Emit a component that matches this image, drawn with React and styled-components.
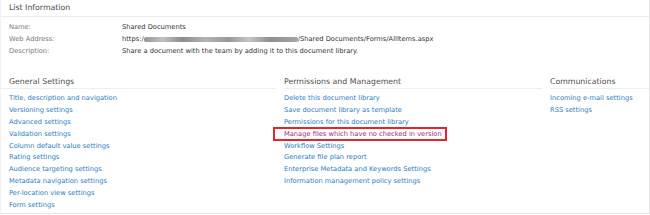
import React from "react";
import styled, { createGlobalStyle } from "styled-components";

const GlobalStyle = createGlobalStyle`
  html, body {
    margin: 0;
    padding: 0;
    background: #ffffff;
  }
  body {
    font-family: "DejaVu Sans", Verdana, sans-serif;
    -webkit-font-smoothing: antialiased;
  }
`;

const Panel = styled.div`
  width: 648px;
  height: 213px;
  border-left: 1px solid #f1f1f1;
  border-right: 1px solid #e4e4e4;
  border-bottom: 1px solid #e4e4e4;
  box-sizing: content-box;
  background: #fff;
`;

const SectionTitle = styled.div`
  height: 16px;
  line-height: 16px;
  padding-left: 8px;
  font-size: 7.8px;
  color: #4a4a4a;
  border-bottom: 1px solid #ececec;
`;

const InfoTable = styled.div`
  display: grid;
  grid-template-columns: 113px 1fr;
  padding: 4px 0 0 8px;
  font-size: 6.7px;
  line-height: 12px;
`;

const Label = styled.div`
  color: #7a7a7a;
`;

const Value = styled.div`
  color: #333;
  white-space: nowrap;
`;

const Smudge = styled.span`
  display: inline-block;
  width: 154px;
  height: 5px;
  vertical-align: middle;
  background: linear-gradient(
    90deg,
    #959595 0%,
    #c2c2c2 12%,
    #8c8c8c 25%,
    #b4b4b4 40%,
    #989898 55%,
    #c6c6c6 68%,
    #8f8f8f 82%,
    #a6a6a6 100%
  );
  filter: blur(0.7px);
  border-radius: 2px;
`;

const Columns = styled.div`
  display: grid;
  grid-template-columns: 275px 258px 1fr;
  column-gap: 8px;
  margin-top: 18px;
`;

const Column = styled.div`
  min-width: 0;
`;

const Heading = styled.div`
  height: 13px;
  line-height: 13px;
  padding-left: ${(p) => (p.$indent ? "8px" : "0")};
  font-size: 7.8px;
  color: #4f4f4f;
  border-bottom: 1px solid #eeeeee;
`;

const LinkList = styled.ul`
  list-style: none;
  margin: 0;
  padding: 4px 0 0 ${(p) => (p.$indent ? "8px" : "0")};
`;

const LinkItem = styled.li`
  height: 11.9px;
  line-height: 11.9px;
  font-size: 6.7px;
  white-space: nowrap;
`;

const SettingLink = styled.a`
  position: relative;
  color: ${(p) => (p.$visited ? "#a0267c" : "#2a7cc2")};
  text-decoration: none;

  ${(p) =>
    p.$marked &&
    `
    &::before {
      content: "";
      position: absolute;
      left: -11px;
      right: -5px;
      top: -3px;
      bottom: -3px;
      border: 2px solid #e1262c;
    }
  `}
`;

const columns = [
  {
    title: "General Settings",
    indent: true,
    links: [
      "Title, description and navigation",
      "Versioning settings",
      "Advanced settings",
      "Validation settings",
      "Column default value settings",
      "Rating settings",
      "Audience targeting settings",
      "Metadata navigation settings",
      "Per-location view settings",
      "Form settings",
    ],
  },
  {
    title: "Permissions and Management",
    links: [
      "Delete this document library",
      "Save document library as template",
      "Permissions for this document library",
      { text: "Manage files which have no checked in version", marked: true },
      "Workflow Settings",
      "Generate file plan report",
      "Enterprise Metadata and Keywords Settings",
      "Information management policy settings",
    ],
  },
  {
    title: "Communications",
    links: ["Incoming e-mail settings", "RSS settings"],
  },
];

export default function App() {
  return (
    <>
      <GlobalStyle />
      <Panel>
        <SectionTitle>List Information</SectionTitle>
        <InfoTable>
          <Label>Name:</Label>
          <Value>Shared Documents</Value>
          <Label>Web Address:</Label>
          <Value>
            https:/<Smudge />/Shared Documents/Forms/AllItems.aspx
          </Value>
          <Label>Description:</Label>
          <Value>
            Share a document with the team by adding it to this document library.
          </Value>
        </InfoTable>

        <Columns>
          {columns.map((col) => (
            <Column key={col.title}>
              <Heading $indent={col.indent}>{col.title}</Heading>
              <LinkList $indent={col.indent}>
                {col.links.map((l) => {
                  const item = typeof l === "string" ? { text: l } : l;
                  return (
                    <LinkItem key={item.text}>
                      <SettingLink
                        href="#"
                        $marked={item.marked}
                        $visited={item.marked}
                      >
                        {item.text}
                      </SettingLink>
                    </LinkItem>
                  );
                })}
              </LinkList>
            </Column>
          ))}
        </Columns>
      </Panel>
    </>
  );
}
